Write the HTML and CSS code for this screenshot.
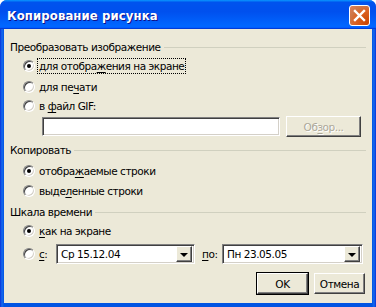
FILE: index.html
```html
<!DOCTYPE html>
<html lang="ru">
<head>
  <meta charset="UTF-8">
  <title>Копирование рисунка</title>
  <link rel="stylesheet" href="styles.css">
</head>
<body>

  <div class="window">
    <div class="titlebar">
      <span class="title">Копирование рисунка</span>
      <span class="close">
        <svg width="13" height="13" viewBox="0 0 13 13"><path d="M2 2 L11 11 M11 2 L2 11" stroke="#fff" stroke-width="2.4" stroke-linecap="square"/></svg>
      </span>
    </div>

    <div class="client">
      <div class="group-head head-image">Преобразовать изображение</div>
      <div class="radio-row row-1">
        <span class="radio checked"></span>
        <span class="label focus">для отобра<u>ж</u>ения на экране</span>
      </div>
      <div class="radio-row row-2">
        <span class="radio"></span>
        <span class="label">для пе<u>ч</u>ати</span>
      </div>
      <div class="radio-row row-3">
        <span class="radio"></span>
        <span class="label">в <u>ф</u>айл GIF:</span>
      </div>
      <div class="file-row">
        <span class="field file-field"></span>
        <span class="btn disabled">Об<u>з</u>ор...</span>
      </div>

      <div class="group-head head-copy">Копировать</div>
      <div class="radio-row row-4">
        <span class="radio checked"></span>
        <span class="label">отобра<u>ж</u>аемые строки</span>
      </div>
      <div class="radio-row row-5">
        <span class="radio"></span>
        <span class="label">выде<u>л</u>енные строки</span>
      </div>

      <div class="group-head head-time">Шкала времени</div>
      <div class="radio-row row-6">
        <span class="radio checked"></span>
        <span class="label"><u>к</u>ак на экране</span>
      </div>
      <div class="combo-row">
        <span class="radio"></span>
        <span class="label from-label"><u>с</u>:</span>
        <span class="field combo combo-from">
          <span class="combo-text">Ср 15.12.04</span>
          <span class="arrow"></span>
        </span>
        <span class="to-label"><u>п</u>о:</span>
        <span class="field combo combo-to">
          <span class="combo-text">Пн 23.05.05</span>
          <span class="arrow"></span>
        </span>
      </div>

      <div class="buttons">
        <span class="btn default">OK</span>
        <span class="btn">Отмена</span>
      </div>
    </div>
  </div>

</body>
</html>
```

FILE: styles.css
```css
:root {
  --face: #ece9d8;
  --shadow: #808080;
  --dark: #404040;
  --line: #d0d0bf;
  --frame: #0054e3;
}

* {
  box-sizing: border-box;
  margin: 0;
  padding: 0;
}

body {
  margin: 0;
  background: #ffffff;
  font-family: "DejaVu Sans", sans-serif;
  font-size: 10.5px;
  letter-spacing: -0.45px;
  color: #000;
}

.window {
  width: 376px;
  height: 307px;
  display: flex;
  flex-direction: column;
  background: linear-gradient(90deg, #0831d9 0, #166aee 2px, #0054e3 4px, #0054e3 372px, #166aee 374px, #0831d9 376px);
  border-radius: 7px 7px 0 0;
  overflow: hidden;
}

.titlebar {
  height: 29px;
  flex: none;
  display: flex;
  align-items: center;
  justify-content: space-between;
  padding: 0 6px 0 7px;
  background: linear-gradient(180deg, #0997ff, #0053ee 8%, #0050ee 40%, #0066ff 88%, #0066ff 93%, #005bff 95%, #003dd7 96%, #003dd7);
}

.title {
  font-family: "DejaVu Sans Condensed", "DejaVu Sans", sans-serif;
  font-weight: bold;
  font-size: 13px;
  letter-spacing: 0.1px;
  color: #fff;
  text-shadow: 1px 1px #0f1089;
  margin-top: 1px;
}

.close {
  width: 21px;
  height: 21px;
  border: 1px solid #fff;
  border-radius: 3px;
  background: radial-gradient(circle at 90% 90%, #cc4600 0%, #dc6527 55%, #cd7546 70%, #e1805a 100%);
  display: flex;
  align-items: center;
  justify-content: center;
  margin-top: 1px;
}

.client {
  flex: 1;
  margin: 0 4px 4px;
  background: var(--face);
  padding: 0 6px;
  display: flex;
  flex-direction: column;
}

.group-head {
  height: 14px;
  display: flex;
  align-items: center;
  gap: 3px;
}

.group-head::after {
  content: "";
  flex: 1;
  height: 1px;
  background: var(--line);
}

.head-image { margin-top: 11px; }
.head-copy { margin-top: 6px; }
.head-time { margin-top: 6px; }

.radio-row {
  height: 16px;
  display: flex;
  align-items: center;
  padding-left: 13px;
}

.row-1 { margin-top: 4px; }
.row-2 { margin-top: 5px; }
.row-3 { margin-top: 3px; }
.row-4 { margin-top: 6px; }
.row-5 { margin-top: 4px; }
.row-6 { margin-top: 4px; }

.radio {
  width: 12px;
  height: 12px;
  flex: none;
  border-radius: 50%;
  background: #fff;
  border: 1px solid;
  border-color: var(--shadow) #fff #fff var(--shadow);
  box-shadow: inset 1px 1px var(--dark), inset -1px -1px #d4d0c8;
  display: flex;
  align-items: center;
  justify-content: center;
}

.radio.checked::after {
  content: "";
  width: 4px;
  height: 4px;
  border-radius: 50%;
  background: #000;
}

.label {
  margin-left: 2px;
  padding: 1px;
  border: 1px solid transparent;
  white-space: nowrap;
}

.label.focus {
  border: 1px dotted #000;
}

u {
  text-decoration: underline;
  text-underline-offset: 2px;
}

.field {
  background: #fff;
  border: 1px solid;
  border-color: var(--shadow) #fff #fff var(--shadow);
  box-shadow: inset 1px 1px var(--dark), inset -1px -1px #d4d0c8;
}

.file-row {
  height: 21px;
  margin-top: 2px;
  display: flex;
  align-items: center;
  padding-left: 32px;
}

.file-field {
  width: 238px;
  height: 19px;
}

.btn {
  height: 21px;
  display: flex;
  align-items: center;
  justify-content: center;
  background: var(--face);
  border: 1px solid;
  border-color: #fff var(--dark) var(--dark) #fff;
  box-shadow: inset -1px -1px var(--shadow);
  white-space: nowrap;
}

.file-row .btn {
  width: 75px;
  margin-left: 6px;
}

.btn.disabled {
  color: #aca899;
  text-shadow: 1px 1px #fff;
}

.combo-row {
  height: 20px;
  margin-top: 5px;
  display: flex;
  align-items: center;
  padding-left: 13px;
}

.from-label {
  width: 19px;
}

.combo {
  height: 20px;
  display: flex;
  align-items: center;
  padding: 2px;
}

.combo-from { width: 139px; }

.combo-to { width: 141px; }

.combo-text {
  flex: 1;
  padding-left: 2px;
}

.to-label {
  width: 20px;
  margin-left: 7px;
}

.arrow {
  width: 16px;
  height: 16px;
  flex: none;
  background: var(--face);
  border: 1px solid;
  border-color: #fff var(--dark) var(--dark) #fff;
  box-shadow: inset -1px -1px var(--shadow);
  display: flex;
  align-items: center;
  justify-content: center;
}

.arrow::after {
  content: "";
  border-left: 4px solid transparent;
  border-right: 4px solid transparent;
  border-top: 4px solid #000;
  margin-top: 1px;
}

.buttons {
  margin-top: 9px;
  display: flex;
  justify-content: flex-end;
  gap: 6px;
  padding-right: 1px;
}

.buttons .btn {
  width: 51px;
  height: 21px;
}

.btn.default {
  outline: 1px solid #000;
}
```
